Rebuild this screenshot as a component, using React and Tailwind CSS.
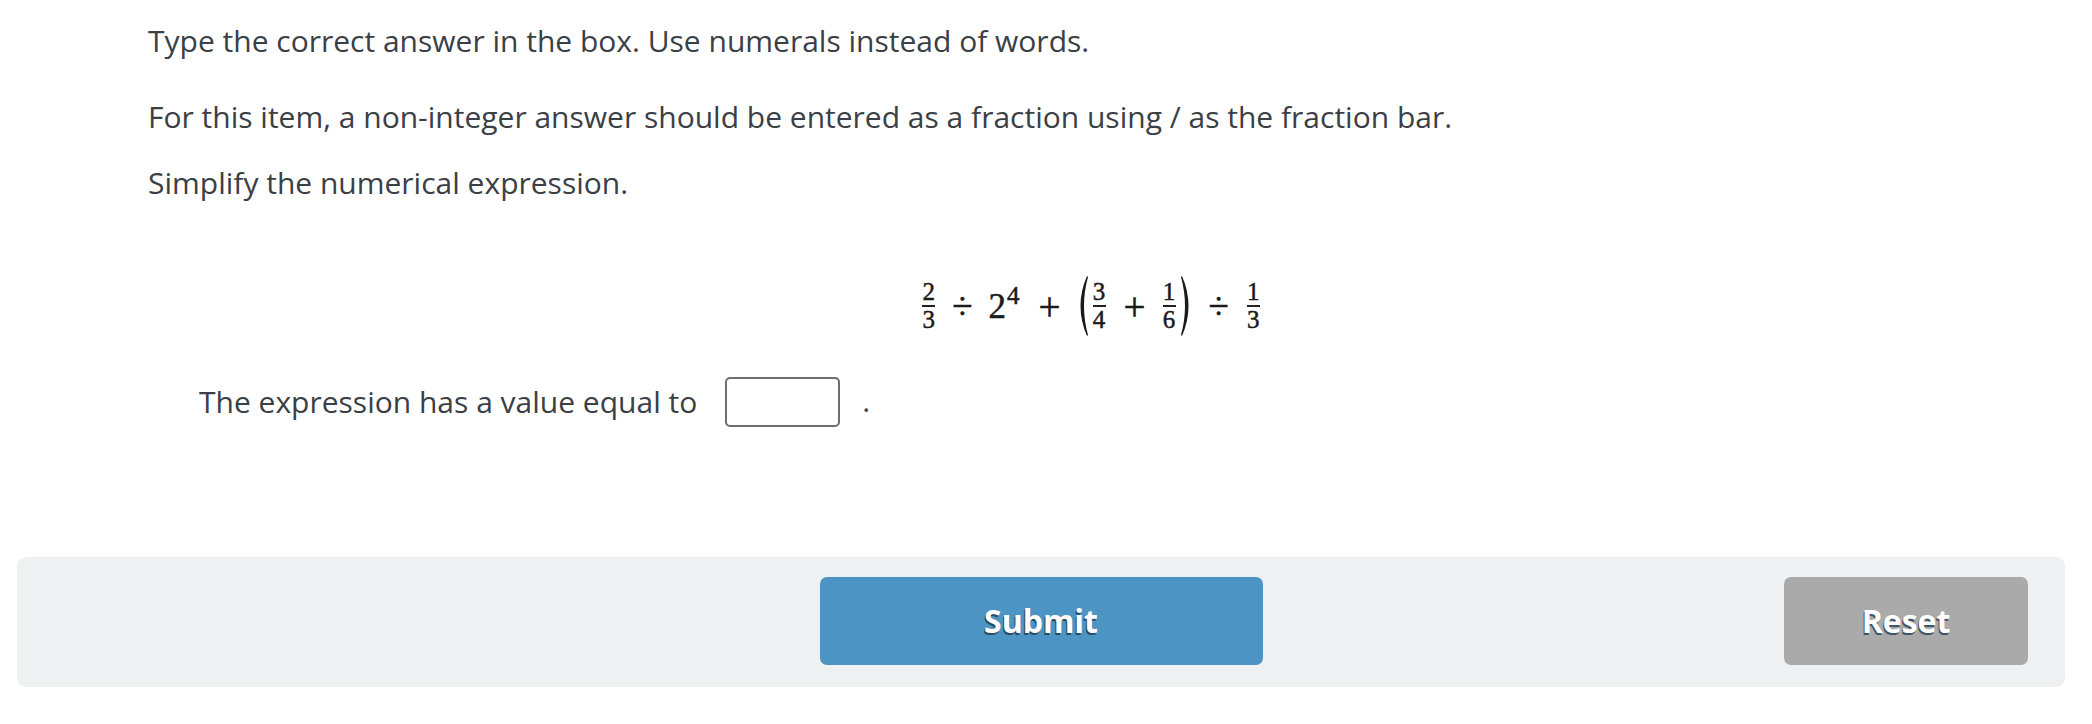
import React from 'react'

function Frac({ n, d }) {
  return (
    <span className="inline-flex flex-col items-center">
      <span className="text-[25px] leading-[24px]">{n}</span>
      <span className="my-[1px] h-[2px] w-[13px] bg-[#222]" />
      <span className="text-[25px] leading-[24px]">{d}</span>
    </span>
  )
}

function Paren({ right }) {
  return (
    <svg width="12" height="60" viewBox="0 0 12 60" className={right ? '-scale-x-100' : ''}>
      <path d="M10 0 Q-3 30 10 60 L11 59 Q3 30 11 1 Z" fill="#1a1a1a" />
    </svg>
  )
}

function Expression() {
  return (
    <div className="flex items-center justify-center text-[#1a1a1a] font-['Liberation_Serif',serif] [-webkit-text-stroke:0.5px_#1a1a1a]">
      <Frac n="2" d="3" />
      <span className="ml-[17px] text-[37px] leading-none">÷</span>
      <span className="ml-[16px] text-[35px] leading-none">2</span>
      <span className="ml-[1px] text-[25px] leading-none -mt-[22px]">4</span>
      <span className="ml-[19px] text-[39px] leading-none">+</span>
      <span className="ml-[16px] flex">
        <Paren />
      </span>
      <span className="ml-[4px]">
        <Frac n="3" d="4" />
      </span>
      <span className="ml-[18px] text-[39px] leading-none">+</span>
      <span className="ml-[17px]">
        <Frac n="1" d="6" />
      </span>
      <span className="ml-[4px] flex">
        <Paren right />
      </span>
      <span className="ml-[17px] text-[37px] leading-none">÷</span>
      <span className="ml-[18px]">
        <Frac n="1" d="3" />
      </span>
    </div>
  )
}

export default function App() {
  return (
    <div className="min-h-screen bg-white font-['Open_Sans',sans-serif] text-[#3a4045]">
      <div className="ml-[148px] w-[1886px]">
        <p className="mt-[21px] text-[30px] leading-[40px]">
          Type the correct answer in the box. Use numerals instead of words.
        </p>
        <p className="mt-[36px] text-[30px] leading-[40px]">
          For this item, a non-integer answer should be entered as a fraction using / as the fraction bar.
        </p>
        <p className="mt-[26px] text-[30px] leading-[40px]">Simplify the numerical expression.</p>

        <div className="mt-[73px]">
          <Expression />
        </div>

        <div className="mt-[41px] ml-[51px] flex items-center text-[30px] leading-[40px]">
          <span>The expression has a value equal to</span>
          <input
            type="text"
            aria-label="answer"
            className="ml-[28px] h-[50px] w-[115px] rounded-[5px] border-2 border-[#6e6e6e] bg-white outline-none"
          />
          <span className="ml-[22px] self-end mb-[6px]">.</span>
        </div>
      </div>

      <div className="mx-[17px] mt-[130px] w-[2048px] rounded-[9px] bg-[#eff0f2] pt-[20px] pb-[22px] grid grid-cols-[1fr_auto_1fr] items-center">
        <div />
        <button className="h-[88px] w-[443px] rounded-[7px] bg-[#4c94c4] text-[32px] font-bold text-white [text-shadow:-1px_2px_0_#2a4a60]">
          Submit
        </button>
        <div className="flex justify-end pr-[37px]">
          <button className="h-[88px] w-[244px] rounded-[7px] bg-[#aaaaaa] text-[32px] font-bold text-white [text-shadow:-1px_2px_0_#3d5566]">
            Reset
          </button>
        </div>
      </div>
    </div>
  )
}
